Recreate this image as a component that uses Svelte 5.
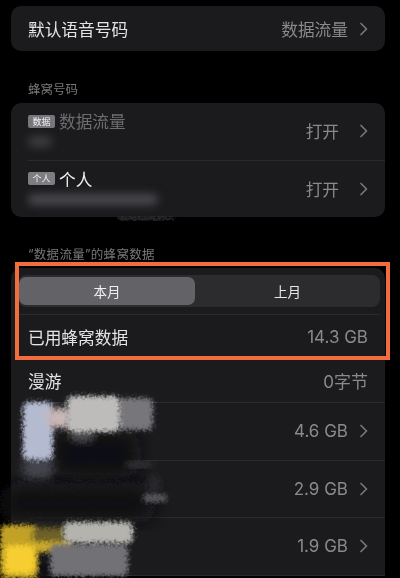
<script>
  const usage = [
    { value: '4.6 GB' },
    { value: '2.9 GB' },
    { value: '1.9 GB' }
  ];

  // painted-over app names in the usage list, drawn back to front
  const smudges = [
    { x: 118, y: 217, w: 56, h: 3, c: '#303033', b: 1 },
    { x: 53, y: 432, w: 84, h: 44, c: '#111113', b: 9 },
    { x: 2, y: 486, w: 150, h: 34, c: '#111113', b: 10 },
    { x: 126, y: 462, w: 26, h: 5, c: '#3c3c40', b: 3 },
    { x: 148, y: 475, w: 12, h: 20, c: '#2a2a2d', b: 3 },
    { x: 23, y: 458, w: 30, h: 20, c: '#44454e', b: 4 },
    { x: 23, y: 402, w: 30, h: 58, c: '#b4bad0', b: 2 },
    { x: 47, y: 408, w: 24, h: 20, c: '#c9b8b8', b: 3 },
    { x: 70, y: 428, w: 24, h: 14, c: '#4c4c50', b: 3 },
    { x: 118, y: 398, w: 35, h: 32, c: '#77767a', b: 2 },
    { x: 67, y: 396, w: 53, h: 36, c: '#bdbcba', b: 2 },
    { x: 143, y: 494, w: 24, h: 8, c: '#55555a', b: 2 },
    { x: 30, y: 560, w: 22, h: 18, c: '#111113', b: 3 },
    { x: 0, y: 525, w: 38, h: 53, c: '#c2a227', b: 2 },
    { x: 33, y: 527, w: 34, h: 18, c: '#6e6128', b: 3 },
    { x: 30, y: 541, w: 42, h: 11, c: '#c9a82a', b: 2 },
    { x: 5, y: 545, w: 30, h: 29, c: '#f7ce30', b: 2 },
    { x: 50, y: 544, w: 78, h: 32, c: '#727176', b: 2 },
    { x: 63, y: 522, w: 70, h: 21, c: '#b4b3ae', b: 2 }
  ];
</script>

{#snippet chevron()}
  <svg class="chevron" width="8" height="14" viewBox="0 0 8 14" aria-hidden="true">
    <path d="M1 1.5 L6.5 7 L1 12.5" fill="none" stroke="#77777b" stroke-width="1.7" stroke-linecap="round" stroke-linejoin="round" />
  </svg>
{/snippet}

<div class="page">
  <section class="card first">
    <div class="row single">
      <span class="title">默认语音号码</span>
      <span class="value">数据流量</span>
      {@render chevron()}
    </div>
  </section>

  <h2 class="label sims-label">蜂窝号码</h2>
  <section class="card">
    <div class="row sim">
      <div class="sim-text">
        <div class="sim-name dim"><span class="badge dim-badge">数据</span>数据流量</div>
        <div class="blurred faint"></div>
      </div>
      <span class="value toggle">打开</span>
      {@render chevron()}
    </div>
    <div class="line"></div>
    <div class="row sim">
      <div class="sim-text">
        <div class="sim-name"><span class="badge">个人</span>个人</div>
        <div class="blurred"></div>
      </div>
      <span class="value toggle">打开</span>
      {@render chevron()}
    </div>
  </section>

  <h2 class="label data-label">“数据流量”的蜂窝数据</h2>
  <section class="card last">
    <div class="tabs">
      <span class="tab active">本月</span>
      <span class="tab">上月</span>
    </div>
    <div class="line full"></div>
    <div class="row stat">
      <span class="title">已用蜂窝数据</span>
      <span class="value num">14.3 GB</span>
    </div>
    <div class="line full"></div>
    <div class="row stat">
      <span class="title">漫游</span>
      <span class="value num">0字节</span>
    </div>
    {#each usage as item}
      <div class="line"></div>
      <div class="row app">
        <span class="value num">{item.value}</span>
        {@render chevron()}
      </div>
    {/each}
    <div class="line"></div>
  </section>

  <svg class="defs" width="0" height="0" aria-hidden="true">
    <filter id="frost" x="-30%" y="-30%" width="160%" height="160%">
      <feTurbulence type="fractalNoise" baseFrequency="0.35" numOctaves="2" seed="4" />
      <feDisplacementMap in="SourceGraphic" scale="7" xChannelSelector="R" yChannelSelector="G" />
    </filter>
  </svg>

  {#each smudges as s}
    <div
      class="smudge"
      style="left:{s.x}px;top:{s.y}px;width:{s.w}px;height:{s.h}px;background:{s.c};filter:blur({s.b}px) url(#frost)"
    ></div>
  {/each}

  <div class="highlight"></div>
</div>

<style>
  :global(body) {
    margin: 0;
    background: #000;
  }

  .page {
    position: relative;
    width: 400px;
    height: 578px;
    overflow: hidden;
    background: #000;
    padding: 6px 15px 0 11px;
    box-sizing: border-box;
    font-family: Inter, "Noto Sans CJK SC", sans-serif;
    color: #e6e6e8;
    filter: blur(0.35px);
  }

  .card {
    background: #1b1b1e;
    border-radius: 10px;
  }

  .last {
    border-radius: 10px 10px 0 0;
    padding-top: 7px;
  }

  .label {
    margin: 0;
    padding-left: 17px;
    font-size: 12.5px;
    font-weight: 400;
    line-height: 16px;
    color: #77777b;
  }

  .sims-label {
    margin-top: 31px;
    margin-bottom: 5px;
  }

  .data-label {
    margin-top: 30px;
    margin-bottom: 5px;
    letter-spacing: 0.3px;
  }

  .row {
    display: flex;
    align-items: center;
    padding: 0 17px;
  }

  .single {
    height: 45px;
  }

  .sim {
    height: 56.5px;
  }

  .stat {
    height: 43px;
  }

  .app {
    height: 56.5px;
    justify-content: flex-end;
  }

  .title {
    font-size: 16.7px;
    color: #e4e4e6;
  }

  .value {
    margin-left: auto;
    font-size: 16.7px;
    color: #8a8a8e;
  }

  .value.toggle {
    margin-right: 9px;
  }

  .num {
    font-size: 17px;
  }

  .app .num {
    margin-left: 0;
  }

  .chevron {
    flex: none;
    margin-left: 12px;
  }

  .sim-text {
    flex: 1;
    align-self: flex-start;
    padding-top: 6px;
  }

  .sim-name {
    display: flex;
    align-items: center;
    height: 24px;
    font-size: 16.7px;
    color: #eeeeee;
  }

  .sim-name.dim {
    color: #6d6d70;
    filter: blur(0.4px);
  }

  .badge {
    display: inline-block;
    width: 27px;
    height: 13px;
    margin-right: 4px;
    border-radius: 2px;
    background: #7e7e82;
    color: #f0f0f0;
    font-size: 9px;
    line-height: 13px;
    text-align: center;
  }

  .dim-badge {
    background: #77777b;
  }

  .blurred {
    width: 130px;
    height: 11px;
    margin-top: 3px;
    border-radius: 5px;
    background: #4a4a4e;
    filter: blur(4px);
  }

  .blurred.faint {
    width: 24px;
    background: #3d3d40;
  }

  .line {
    height: 1px;
    margin-left: 17px;
    background: #2b2b2e;
  }

  .line.full {
    margin-left: 7px;
    margin-right: 5px;
  }

  .tabs {
    display: flex;
    height: 32px;
    margin: 0 5px 7px 7px;
    border-radius: 8px;
    background: #2c2c2f;
  }

  .tab {
    flex: 1;
    display: flex;
    align-items: center;
    justify-content: center;
    border-radius: 7px;
    font-size: 13.5px;
    color: #e8e8ea;
  }

  .tab.active {
    flex: none;
    width: 176px;
    margin: 2px 0 2px 1px;
    background: #636367;
    color: #f0f0f0;
  }

  .defs {
    position: absolute;
  }

  .smudge {
    position: absolute;
    border-radius: 6px;
  }

  .highlight {
    position: absolute;
    left: 15px;
    top: 262px;
    width: 375px;
    height: 98px;
    box-sizing: border-box;
    border: 4.5px solid #f26d3d;
    pointer-events: none;
  }
</style>
